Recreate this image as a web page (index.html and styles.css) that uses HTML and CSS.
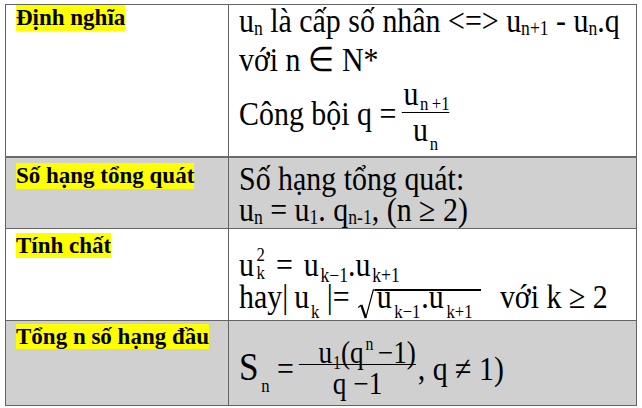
FILE: index.html
```html
<!DOCTYPE html>
<html lang="vi">
<head>
<meta charset="utf-8">
<link rel="stylesheet" href="styles.css">
</head>
<body>
<table class="sheet">
  <tr class="r1">
    <td class="label"><span class="hl">Định nghĩa</span></td>
    <td class="content">
      <div class="cx">
        <div class="ln a1">u<sub>n</sub> là cấp số nhân &lt;=&gt; u<sub>n+1</sub> - u<sub>n</sub>.q</div>
        <div class="ln a2">với n ∈ N*</div>
        <div class="ln a3">Công bội q =<span class="frac f1"><span class="num">u<span class="ms m-num">n&thinsp;+1</span></span><span class="den">u<span class="ms m-den">n</span></span></span></div>
      </div>
    </td>
  </tr>
  <tr class="r2 gray">
    <td class="label"><span class="hl">Số hạng tổng quát</span></td>
    <td class="content">
      <div class="cx">
        <div class="ln b1">Số hạng tổng quát:</div>
        <div class="ln b2">u<sub>n</sub> = u<sub>1</sub>. q<sub>n-1</sub>, (n ≥ 2)</div>
      </div>
    </td>
  </tr>
  <tr class="r3">
    <td class="label"><span class="hl">Tính chất</span></td>
    <td class="content">
      <div class="cx">
        <div class="ln c1">u<span class="ss"><span>2</span><span>k</span></span> <span class="eq">=</span> u<span class="ms mk1">k−1</span>.u<span class="ms mk1">k+1</span></div>
        <div class="ln c2">hay|&thinsp;u<span class="ms mk2">k</span> |=&thinsp;<svg class="rad" width="19" height="30" viewBox="0 0 19 30"><path d="M0.5 18.5 L4 16" stroke="#000" stroke-width="1.3" fill="none"/><path d="M4 16 L9 29" stroke="#000" stroke-width="2.6" fill="none"/><path d="M9 29 L17.6 1 L19 1" stroke="#000" stroke-width="1.3" fill="none"/></svg><span class="radicand">u<span class="ms mk2">k−1</span>.u<span class="ms mk2">k+1</span></span><span class="gap"></span>với k ≥ 2</div>
      </div>
    </td>
  </tr>
  <tr class="r4 gray">
    <td class="label"><span class="hl">Tổng n số hạng đầu</span></td>
    <td class="content">
      <div class="cx">
        <div class="ln d1"><span class="bigS">S</span><span class="ms mS">n</span> =<span class="frac f2"><span class="num">u<span class="ms m1">1</span>(q<span class="msup">n</span>−1)</span><span class="den">q −1</span></span>, q ≠ 1)</div>
      </div>
    </td>
  </tr>
</table>
</body>
</html>
```
FILE: styles.css
```css
html, body {
  margin: 0;
  padding: 0;
  background: #ffffff;
}
body {
  font-family: "Liberation Serif", "Times New Roman", serif;
  color: #000;
}
.sheet {
  border-collapse: collapse;
  margin: 4px 0 0 5px;
  width: 632px;
  table-layout: fixed;
}
.sheet td {
  border: 1px solid #636363;
  vertical-align: top;
  padding: 0;
}
.sheet tr.r1 td { border-bottom: 2px solid #6b6b6b; }
.r1 { height: 152px; }
.r2 { height: 72px; }
.r3 { height: 92px; }
.r4 { height: 85px; }
.gray td { background: #d0d0d0; }

/* labels */
td.label {
  width: 212px;
  padding: 0 0 0 10px;
}
.r2 td.label { padding-top: 5px; }
.r3 td.label { padding-top: 4px; }
.r4 td.label { padding-top: 3px; }
.hl {
  background: #ffff00;
  font-weight: bold;
  font-size: 23px;
  line-height: 26px;
  display: inline-block;
}
.r3 .hl, .r4 .hl { line-height: 25px; }

/* content */
td.content {
  padding: 0 0 0 10px;
  font-size: 34px;
}
.cx {
  transform: scaleX(0.88);
  transform-origin: 0 0;
}
.ln {
  white-space: nowrap;
  line-height: 31px;
}
sub {
  font-size: 20px;
  vertical-align: -3px;
  line-height: 1;
}

/* row 1 */
.a1 { height: 39px; }
.a2 { height: 38px; }
.a3 { height: 66px; }
.frac {
  display: inline-flex;
  flex-direction: column;
  align-items: center;
  vertical-align: 20px;
}
.frac .num {
  height: 24px;
  line-height: 24px;
  border-bottom: 1px solid #000;
}
.frac .den {
  height: 34px;
  line-height: 34px;
}
.f1 { margin-left: 6px; }
.f1 .num { padding: 0 0 6px 2px; }
.ms {
  font-size: 19px;
  line-height: 1;
  margin-left: 2px;
}
.m-num { vertical-align: -5px; }
.m-den { vertical-align: -9px; }

/* row 2 */
.r2 td.content { padding-top: 5px; }

/* row 3 */
.r3 td.content { padding-top: 20px; }
.c1 { height: 32px; }
.c2 { height: 36px; }
.ss {
  display: inline-flex;
  flex-direction: column;
  font-size: 19px;
  line-height: 18px;
  vertical-align: 15px;
  margin: -4px 4px -10px 3px;
}
.eq { margin: 0 4px 0 0; }
.mk1 { vertical-align: -6px; font-size: 20px; }
.mk2 { vertical-align: -10px; }
.rad {
  vertical-align: -11px;
  margin-left: 2px;
}
.radicand {
  display: inline-block;
  border-top: 2px solid #000;
  line-height: 11px;
  padding: 0 9px 0 3px;
}
.radicand .ms { margin-left: 3px; margin-right: 1px; }
.gap { display: inline-block; width: 21px; }

/* row 4 */
.r4 td.content { padding-top: 14px; }
.bigS { font-size: 40px; }
.mS { vertical-align: -12px; margin-left: 3px; }
.f2 {
  margin-left: 6px;
  margin-right: 2px;
  vertical-align: 17px;
}
.f2 .num {
  padding: 0 0 4px 22px;
  font-size: 31px;
  height: 25px;
  line-height: 25px;
}
.f2 .den {
  font-size: 31px;
  height: 30px;
  line-height: 30px;
  padding-top: 4px;
}
.m1 { vertical-align: -6px; font-size: 18px; margin-left: 1px; }
.msup {
  font-size: 18px;
  line-height: 1;
  vertical-align: 13px;
  margin: 0 5px 0 2px;
}
```
